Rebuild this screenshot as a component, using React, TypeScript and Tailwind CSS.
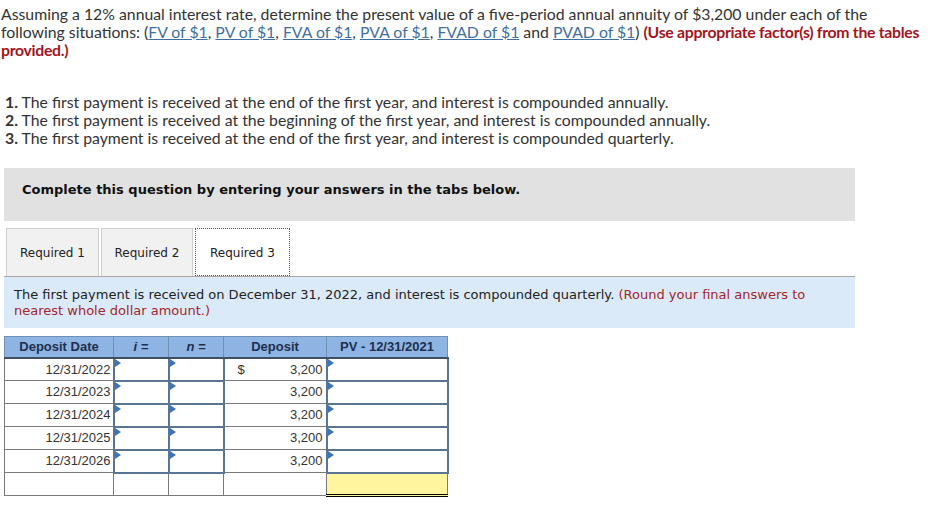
import React from 'react';

const rows = ['12/31/2022', '12/31/2023', '12/31/2024', '12/31/2025', '12/31/2026'];

const Flag = () => (
  <span className="absolute left-0 top-0 h-0 w-0 border-y-[4px] border-l-[6px] border-y-transparent border-l-[#3b74b8]" />
);

const InputCell = () => (
  <td className="relative border-2 border-[#5a7494] bg-white p-0">
    <Flag />
  </td>
);

export default function App() {
  return (
    <div className="min-h-[506px] w-[941px] bg-white text-[#333]">
      {/* question */}
      <div className="pl-[1px] pt-[5px] font-['Lato',sans-serif] text-[15.8px] leading-[18px] text-[#333]">
        <p>
          <span>Assuming a 12% annual interest rate, determine the present value of a five-period annual annuity of $3,200 under each of the</span>
          <br />
          <span>following situations: (</span>
          {['FV of $1', 'PV of $1', 'FVA of $1', 'PVA of $1', 'FVAD of $1'].map((t, i) => (
            <React.Fragment key={t}>
              <a className="text-[#3f6f9f] underline">{t}</a>
              <span>{i < 4 ? ', ' : ' and '}</span>
            </React.Fragment>
          ))}
          <a className="text-[#3f6f9f] underline">PVAD of $1</a>
          <span>) </span>
          <b className="tracking-[-0.3px] text-[#a3151c]">(Use appropriate factor(s) from the tables</b>
          <br />
          <b className="tracking-[-0.3px] text-[#a3151c]">provided.)</b>
        </p>
        <ol className="mt-[34px] pl-[4px]">
          <li><b>1.</b> The first payment is received at the end of the first year, and interest is compounded annually.</li>
          <li><b>2.</b> The first payment is received at the beginning of the first year, and interest is compounded annually.</li>
          <li><b>3.</b> The first payment is received at the end of the first year, and interest is compounded quarterly.</li>
        </ol>
      </div>

      <div className="ml-[4px] w-[851px] font-['DejaVu_Sans',Verdana,sans-serif] text-[13px]">
        {/* instruction banner */}
        <div className="mt-[21px] h-[53px] bg-[#e1e1e1] pl-[18px] pt-[14px] text-[13px] font-bold leading-[16px] text-[#111]">
          Complete this question by entering your answers in the tabs below.
        </div>

        {/* tabs */}
        <div className="mt-[7px] flex items-end gap-[2px] border-b border-[#a9a9a9] pl-[2px]">
          <div className="flex h-[48px] w-[93px] items-center justify-center border border-b-0 border-[#cfcfcf] bg-[#f1f1f1] text-[12px] text-[#222]">Required 1</div>
          <div className="flex h-[48px] w-[92px] items-center justify-center border border-b-0 border-[#cfcfcf] bg-[#f1f1f1] text-[12px] text-[#222]">Required 2</div>
          <div className="flex h-[48px] w-[95px] items-center justify-center border border-dotted border-[#4a5866] bg-white pt-[1px] text-[12px] text-[#222]">Required 3</div>
        </div>

        {/* info */}
        <div className="h-[51px] bg-[#dbeaf8] px-[10px] pt-[10px] text-[13px] leading-[16px] text-[#222]">
          <span>The first payment is received on December 31, 2022, and interest is compounded quarterly. </span>
          <span className="text-[#a3262a]">(Round your final answers to</span>
          <br />
          <span className="text-[#a3262a]">nearest whole dollar amount.)</span>
        </div>

        {/* table */}
        <table className="mt-[8px] border-collapse font-['Liberation_Sans',Arial,sans-serif] text-[13px] text-[#333]">
          <colgroup>
            <col className="w-[109px]" />
            <col className="w-[55px]" />
            <col className="w-[55px]" />
            <col className="w-[103px]" />
            <col className="w-[121px]" />
          </colgroup>
          <thead>
            <tr className="h-[21px] bg-[#8db4e3] text-[13px] font-bold text-[#1e2f4c]">
              <th className="border border-[#6f8fb5] border-b-2 border-b-[#3e4f66] font-bold">Deposit Date</th>
              <th className="border border-[#6f8fb5] border-b-2 border-b-[#3e4f66] font-bold italic">i =</th>
              <th className="border border-[#6f8fb5] border-b-2 border-b-[#3e4f66] font-bold italic">n =</th>
              <th className="border border-[#6f8fb5] border-b-2 border-b-[#3e4f66] font-bold">Deposit</th>
              <th className="border border-[#6f8fb5] border-b-2 border-b-[#3e4f66] font-bold">PV - 12/31/2021</th>
            </tr>
          </thead>
          <tbody>
            {rows.map((d, idx) => (
              <tr key={d} className="h-[23px]">
                <td className="border border-[#7a7a7a] pr-[2px] text-right">{d}</td>
                <InputCell />
                <InputCell />
                <td className="border border-[#7a7a7a] pr-[3px]">
                  <div className="flex justify-between pl-[13px]">
                    <span>{idx === 0 ? '$' : ''}</span>
                    <span>3,200</span>
                  </div>
                </td>
                <InputCell />
              </tr>
            ))}
            <tr className="h-[23px]">
              <td className="border border-[#7a7a7a]" />
              <td className="border border-[#7a7a7a]" />
              <td className="border border-[#7a7a7a]" />
              <td className="border border-[#7a7a7a]" />
              <td className="border border-[#7a7a7a] border-b-[3px] border-b-black border-double bg-[#fff59f]" />
            </tr>
          </tbody>
        </table>
      </div>
    </div>
  );
}
